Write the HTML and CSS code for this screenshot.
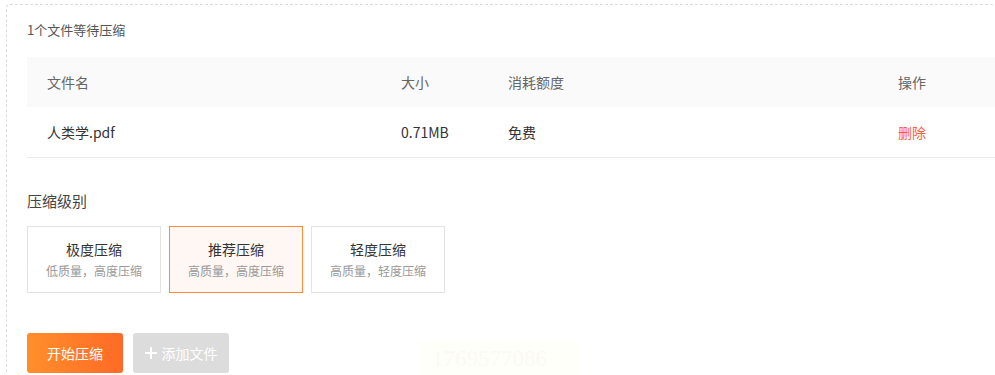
FILE: index.html
```html
<!DOCTYPE html>
<html lang="zh-CN">
<head>
  <meta charset="UTF-8">
  <meta name="viewport" content="width=device-width, initial-scale=1.0">
  <title>PDF压缩</title>
  <link rel="stylesheet" href="styles.css">
</head>
<body>
  <div class="panel">
    <p class="count">1个文件等待压缩</p>

    <div class="file-table">
      <div class="row head">
        <div class="cell">文件名</div>
        <div class="cell">大小</div>
        <div class="cell">消耗额度</div>
        <div class="cell">操作</div>
      </div>
      <div class="row">
        <div class="cell">人类学.pdf</div>
        <div class="cell">0.71MB</div>
        <div class="cell">免费</div>
        <div class="cell"><a class="del" href="#">删除</a></div>
      </div>
    </div>

    <h3 class="level-title">压缩级别</h3>
    <div class="levels">
      <div class="level">
        <div class="level-name">极度压缩</div>
        <div class="level-desc">低质量，高度压缩</div>
      </div>
      <div class="level active">
        <div class="level-name">推荐压缩</div>
        <div class="level-desc">高质量，高度压缩</div>
      </div>
      <div class="level">
        <div class="level-name">轻度压缩</div>
        <div class="level-desc">高质量，轻度压缩</div>
      </div>
    </div>

    <div class="actions">
      <button class="btn start-btn">开始压缩</button>
      <button class="btn add-btn"><span class="plus"></span>添加文件</button>
    </div>

    <div class="watermark">1769577086</div>
  </div>
</body>
</html>
```

FILE: styles.css
```css
html, body {
  margin: 0;
  padding: 0;
  overflow: hidden;
  background: #fff;
}

body {
  font-family: "Noto Sans CJK SC", "Liberation Sans", sans-serif;
  color: #333;
}

.panel {
  position: relative;
  width: 1100px;
  height: 380px;
  margin: 4px 0 0 6px;
  padding: 15px 20px 0;
  border: 1px dashed #ddd;
  border-radius: 4px;
  overflow: hidden;
}

.count {
  margin: 0;
  font-size: 13px;
  line-height: 20px;
  color: #555;
}

.file-table {
  margin-top: 17px;
  font-size: 14px;
}

.row {
  display: grid;
  grid-template-columns: 354px 107px 390px 1fr;
  height: 50px;
  align-items: center;
  border-bottom: 1px solid #ebebeb;
}

.row.head {
  background: #fafafa;
  border-bottom: none;
  color: #666;
}

.cell {
  padding-left: 20px;
}

.del {
  color: #ff5b3a;
  text-decoration: none;
}

.level-title {
  margin: 32px 0 0;
  font-size: 15px;
  font-weight: normal;
  line-height: 22px;
  color: #444;
}

.levels {
  display: flex;
  gap: 8px;
  margin-top: 14px;
}

.level {
  width: 132px;
  height: 65px;
  border: 1px solid #e3e3e3;
  text-align: center;
  box-sizing: content-box;
}

.level.active {
  border-color: #ff8a3d;
  background: #fff7f3;
}

.level-name {
  margin-top: 12px;
  font-size: 14px;
  line-height: 20px;
  color: #333;
}

.level-desc {
  margin-top: 3px;
  font-size: 12px;
  line-height: 18px;
  color: #999;
}

.actions {
  display: flex;
  gap: 10px;
  margin-top: 40px;
}

.btn {
  width: 96px;
  height: 40px;
  border: none;
  border-radius: 3px;
  color: #fff;
  font-family: inherit;
  font-size: 14px;
  cursor: pointer;
  display: flex;
  align-items: center;
  justify-content: center;
}

.start-btn {
  background: linear-gradient(90deg, #ff8f2b, #ff6a26);
}

.add-btn {
  background: #dcdcdc;
}

.plus {
  position: relative;
  width: 12px;
  height: 12px;
  margin-right: 5px;
}

.plus::before,
.plus::after {
  content: "";
  position: absolute;
  background: #fff;
}

.plus::before {
  left: 0;
  top: 5px;
  width: 12px;
  height: 2px;
}

.plus::after {
  left: 5px;
  top: 0;
  width: 2px;
  height: 12px;
}

.watermark {
  position: absolute;
  left: 412px;
  top: 336px;
  width: 145px;
  height: 40px;
  padding-left: 13px;
  background: #fffffa;
  color: #fafaf3;
  font-family: "Liberation Serif", serif;
  font-size: 23px;
  line-height: 36px;
}
```
